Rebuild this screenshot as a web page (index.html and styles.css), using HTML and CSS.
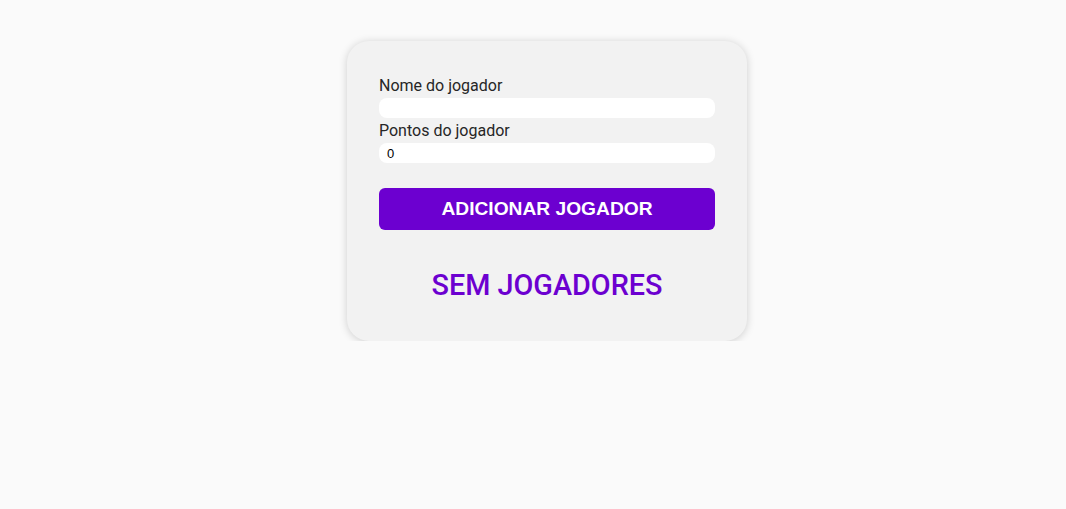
FILE: index.html
```html
<!DOCTYPE html>
<html lang="pt">
<head>
<meta charset="utf-8">
<link rel="stylesheet" href="styles.css">
</head>
<body>
<main class="page">
  <section class="card">
    <form class="form">
      <label class="label" for="nome">Nome do jogador</label>
      <input class="input" id="nome" type="text">
      <label class="label" for="pontos">Pontos do jogador</label>
      <input class="input" id="pontos" type="number" value="0">
      <button class="btn" type="button">ADICIONAR JOGADOR</button>
    </form>
    <h2 class="empty">SEM JOGADORES</h2>
  </section>
</main>
</body>
</html>
```
FILE: styles.css
```css
html, body {
  margin: 0;
  padding: 0;
  background: #fafafa;
  font-family: Roboto, "Liberation Sans", sans-serif;
}
.page {
  display: flex;
  justify-content: center;
  padding-top: 41px;
  padding-left: 28px;
}
.card {
  width: 336px;
  padding: 32px 32px 38px;
  background: #f2f2f2;
  border-radius: 22px;
  box-shadow: 0 1px 8px rgba(0,0,0,0.18);
}
.form {
  display: flex;
  flex-direction: column;
}
.label {
  font-size: 16px;
  color: #262626;
  line-height: 19px;
  margin-top: 3px;
  margin-bottom: 3px;
}
.input {
  height: 20px;
  border: none;
  border-radius: 8px;
  background: #fff;
  padding: 0 8px;
  margin: 0;
  font-family: "Liberation Sans", Arial, sans-serif;
  font-size: 13px;
  color: #000;
  outline: none;
  -moz-appearance: textfield;
}
.input::-webkit-inner-spin-button,
.input::-webkit-outer-spin-button { -webkit-appearance: none; margin: 0; }
.btn {
  margin-top: 25px;
  height: 42px;
  border: none;
  border-radius: 6px;
  background: #6c00d0;
  color: #fff;
  font-family: "Liberation Sans", Arial, sans-serif;
  font-weight: bold;
  font-size: 19.2px;
}
.empty {
  margin: 37px 0 0;
  text-align: center;
  font-size: 28.8px;
  font-weight: 500;
  color: #6c00d0;
  line-height: 36px;
}
```
